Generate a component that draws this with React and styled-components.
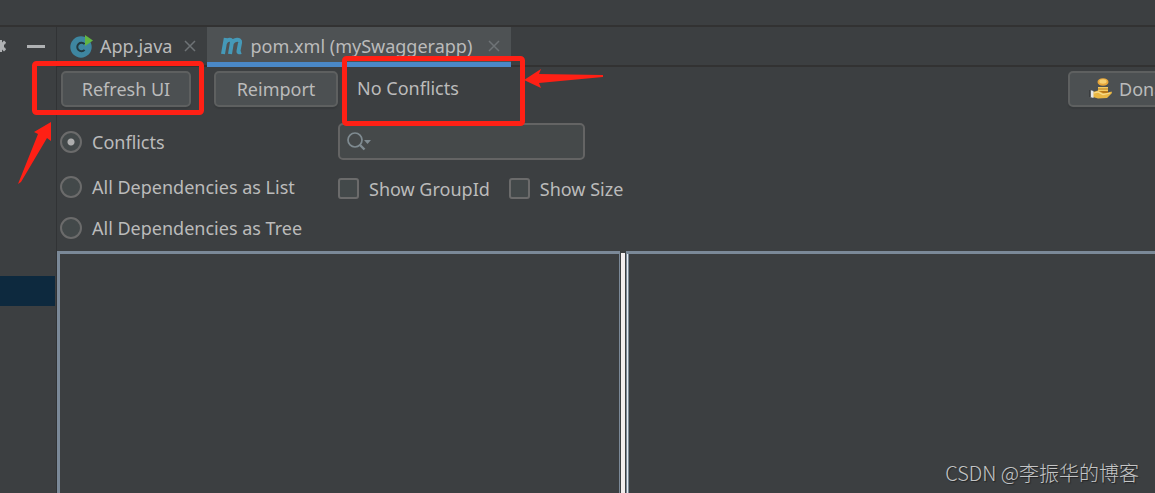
import { useState } from "react";
import styled, { createGlobalStyle } from "styled-components";

const App = () => {
  const [view, setView] = useState("conflicts");

  return (
    <Window>
      <GlobalStyle />
      <TopBar />
      <Main>
        <SidePanel>
          <SideHeader>
            <GearIcon />
            <HideButton aria-label="Hide" />
          </SideHeader>
          <SelectedRow />
        </SidePanel>
        <Editor>
          <Tabs>
            <Tab>
              <ClassIcon />
              App.java
              <CloseIcon />
            </Tab>
            <Tab $active>
              <MavenIcon />
              pom.xml (mySwaggerapp)
              <CloseIcon />
            </Tab>
          </Tabs>

          <Toolbar>
            <Button $width={130}>Refresh UI</Button>
            <Button $width={124}>Reimport</Button>
            <Status>No Conflicts</Status>
            <DonateButton $width={124}>
              <DonateIcon />
              Donate
            </DonateButton>
          </Toolbar>

          <Filters>
            <Option>
              <Radio name="view" checked={view === "conflicts"} onChange={() => setView("conflicts")} />
              Conflicts
            </Option>
            <SearchBox>
              <SearchIcon />
              <SearchInput aria-label="Search" />
            </SearchBox>
            <Option>
              <Radio name="view" checked={view === "list"} onChange={() => setView("list")} />
              All Dependencies as List
            </Option>
            <Checks>
              <Option>
                <Checkbox />
                Show GroupId
              </Option>
              <Option>
                <Checkbox />
                Show Size
              </Option>
            </Checks>
            <Option>
              <Radio name="view" checked={view === "tree"} onChange={() => setView("tree")} />
              All Dependencies as Tree
            </Option>
          </Filters>

          <Split>
            <LeftPane />
            <Divider />
            <RightPane />
          </Split>
        </Editor>
      </Main>
      <Marks />
      <Watermark>CSDN @李振华的博客</Watermark>
    </Window>
  );
};

export default App;

const GearIcon = () => (
  <svg width="7" height="14" viewBox="0 0 7 14" aria-hidden="true">
    <path
      fill="#afb1b3"
      d="M0 1H2V3.500L4 1.500L6 3.500L5 5.500H4V8.500H5L6 10.500L4 12.500L2 10.500V13H0Z"
    />
  </svg>
);

const ClassIcon = () => (
  <svg width="24" height="24" viewBox="0 0 24 24" aria-hidden="true">
    <circle cx="11" cy="13" r="10.700" fill="#3e86a0" />
    <path d="M14.600 10.200A4.200 4.200 0 1 0 14.600 15.800" fill="none" stroke="#22393f" strokeWidth="2" />
    <path d="M15 1V12L23 6.500Z" fill="#62b543" />
  </svg>
);

const MavenIcon = () => (
  <svg width="24" height="18" viewBox="0 0 24 18" aria-hidden="true">
    <path
      d="M3 17L5.800 1M5 6C7 2 12.500 1.500 11.900 5.500L10 17M11.900 6C14 2 20.700 1.500 20.100 5.500L18.500 14C18.300 15.500 19.500 15.500 21 15"
      fill="none"
      stroke="#4599b8"
      strokeWidth="4"
    />
  </svg>
);

const CloseIcon = () => (
  <svg width="12" height="12" viewBox="0 0 12 12" aria-hidden="true">
    <path d="M1 1L11 11M11 1L1 11" stroke="#6e7376" strokeWidth="1.500" />
  </svg>
);

const SearchIcon = () => (
  <svg width="26" height="20" viewBox="0 0 26 20" aria-hidden="true">
    <circle cx="8" cy="8" r="7" fill="none" stroke="#7f8b91" strokeWidth="1.700" />
    <path d="M12.500 12.500L17.500 17.500" stroke="#7f8b91" strokeWidth="2.400" />
    <path d="M17 8H24L20.500 12Z" fill="#7f8b91" />
  </svg>
);

const DonateIcon = () => (
  <svg width="24" height="24" viewBox="0 0 24 24" aria-hidden="true">
    <ellipse cx="14" cy="5" rx="5.500" ry="3.800" fill="#e6a53a" />
    <ellipse cx="14" cy="4.500" rx="3.600" ry="2.200" fill="#f6cf72" />
    <path d="M9 10H19V16H9Z" fill="#b97a1c" />
    <path d="M9 10.800H19M9 13.300H19" stroke="#f3cb62" strokeWidth="1.500" />
    <path d="M4 15L9 13.500L14 16H18L22.500 14.500L23 16L18 21L9 21.500L4 20Z" fill="#e9b744" />
    <path d="M5 16L9 15L14 17.500L21 16" fill="none" stroke="#f8db8c" strokeWidth="1.200" />
    <path d="M1 13L4.500 14V21L1 20Z" fill="#e4e6e8" />
    <path d="M1 13V20" stroke="#34373a" strokeWidth="1.500" />
  </svg>
);

// red call-outs drawn over the window
const Marks = () => (
  <MarkLayer width="620" height="200" viewBox="0 0 620 200" aria-hidden="true">
    <g fill="none" stroke="#ff2015" strokeWidth="5">
      <rect x="34.500" y="63.500" width="167" height="49" rx="2" />
      <rect x="344.500" y="58.500" width="178" height="65" rx="2" />
    </g>
    <g fill="#ff2015">
      <path d="M51 122L34 132L38 134L18 184L21 182L47 138L51 141Z" />
      <path d="M524 80L541 69L539 74L603 75V77L539 83L541 88Z" />
    </g>
  </MarkLayer>
);

const GlobalStyle = createGlobalStyle`
  * {
    box-sizing: border-box;
  }

  body {
    margin: 0;
    background: #3c3f41;
  }

  body, button, input {
    font-family: "Noto Sans", "Noto Sans CJK SC", sans-serif;
    font-size: 18px;
    line-height: 24px;
    color: #bbbbbb;
  }
`;

const Window = styled.div`
  position: relative;
  display: flex;
  flex-direction: column;
  min-height: 100vh;
  overflow: hidden;
  background: #3c3f41;
`;

const TopBar = styled.header`
  height: 27px;
  border-bottom: 2px solid #323232;
`;

const Main = styled.div`
  flex: 1;
  display: flex;
`;

const SidePanel = styled.aside`
  flex: none;
  width: 57px;
  border-right: 1px solid #313335;
`;

const SideHeader = styled.div`
  display: flex;
  align-items: center;
  gap: 20px;
  height: 38px;
`;

const HideButton = styled.button`
  width: 18px;
  height: 3px;
  padding: 0;
  border: 0;
  background: #afb1b3;
`;

const SelectedRow = styled.div`
  height: 30px;
  margin: 211px 1px 0 0;
  background: #0d293e;
`;

const Editor = styled.main`
  flex: 1;
  min-width: 0;
  display: flex;
  flex-direction: column;
`;

const Tabs = styled.nav`
  display: flex;
  height: 40px;
  background: linear-gradient(#323232, #323232) bottom / 100% 2px no-repeat;
`;

const Tab = styled.div`
  display: flex;
  align-items: center;
  gap: 6px;
  padding: 0 11px 2px 13px;
  white-space: nowrap;
  background: ${(props) => (props.$active ? "#4e5254" : "transparent")};
  box-shadow: ${(props) => (props.$active ? "inset 0 -5px #4a88c7" : "none")};

  svg:last-child {
    margin-left: ${(props) => (props.$active ? 10 : 6)}px;
  }
`;

const Toolbar = styled.div`
  display: flex;
  padding: 4px 0 0 4px;
`;

const Button = styled.button`
  flex: none;
  width: ${(props) => props.$width}px;
  height: 36px;
  margin-right: 23px;
  padding: 0;
  border: 2px solid #5e6060;
  border-radius: 5px;
  background: #4c5052;
  box-shadow: 0 2px 1px #373a3c;
`;

const DonateButton = styled(Button)`
  display: flex;
  align-items: center;
  gap: 6px;
  margin: 0 -37px 0 auto;
  padding-left: 19px;
`;

const Status = styled.span`
  padding-top: 5px;
  margin-left: -4px;
`;

const Filters = styled.div`
  display: grid;
  grid-template-columns: 278px auto;
  grid-template-rows: 37px 54px 28px;
  justify-content: start;
  align-items: center;
  padding: 16px 0 9px 3px;
`;

const Option = styled.label`
  display: flex;
  align-items: center;
  gap: 10px;
  white-space: nowrap;
`;

const Radio = styled.input.attrs({ type: "radio" })`
  appearance: none;
  width: 22px;
  height: 22px;
  margin: 0;
  border: 2px solid #6b6b6b;
  border-radius: 50%;
  background: #43494a;

  &:checked {
    background: radial-gradient(circle, #adadad 3px, #43494a 4px);
  }
`;

const Checkbox = styled.input.attrs({ type: "checkbox" })`
  appearance: none;
  width: 21px;
  height: 21px;
  margin: 0;
  border: 2px solid #6b6b6b;
  border-radius: 3px;
  background: #43494a;
`;

const Checks = styled.div`
  display: flex;
  gap: 19px;
  padding-top: 3px;
`;

const SearchBox = styled.div`
  display: flex;
  align-items: center;
  width: 247px;
  height: 37px;
  padding-left: 7px;
  border: 2px solid #646464;
  border-radius: 5px;
  background: #45494a;
`;

const SearchInput = styled.input`
  flex: 1;
  min-width: 0;
  padding: 0 6px;
  border: 0;
  outline: 0;
  background: transparent;
`;

const Split = styled.div`
  flex: 1;
  display: flex;
`;

const LeftPane = styled.section`
  flex: 562;
  border: solid #7b8998;
  border-width: 3px 1px 0 3px;
`;

const Divider = styled.div`
  width: 4px;
  margin: 2px 1px 0;
  background: #f2eeee;
`;

const RightPane = styled.section`
  flex: 531;
  border-top: 3px solid #7b8998;
  border-left: 1px solid #7b8998;
  box-shadow: inset 1px 0 #e6ebef, inset 2px 0 #7b8998;
`;

const MarkLayer = styled.svg`
  position: absolute;
  top: 0;
  left: 0;
  pointer-events: none;
`;

const Watermark = styled.div`
  position: absolute;
  right: 16px;
  bottom: 8px;
  font-family: "Noto Sans CJK SC", sans-serif;
  font-size: 20px;
  font-weight: 300;
  color: #c4c5c6;
  text-shadow: 1px 1px 1px #222425;
`;
